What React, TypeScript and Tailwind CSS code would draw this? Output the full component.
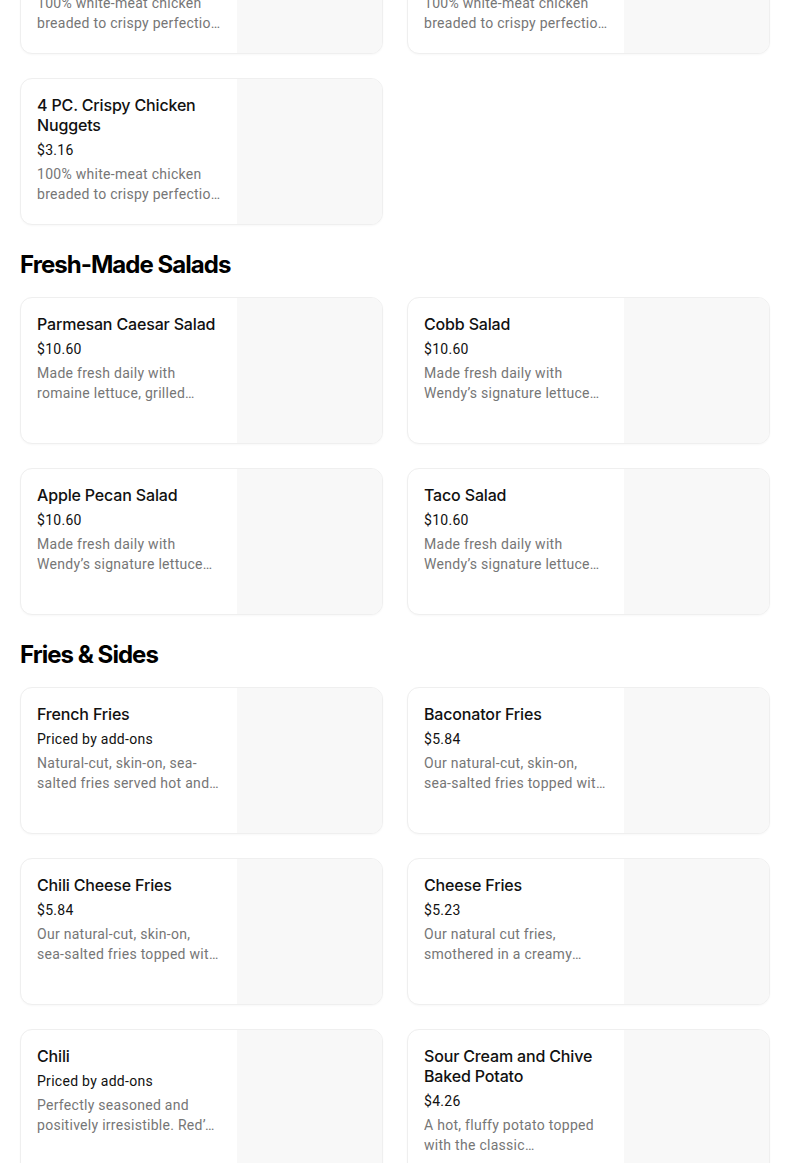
import React from "react";

type Item = { title: string; price: string; desc: string };

const nuggets: Item[] = [
  { title: "10 PC. Crispy Chicken Nuggets", price: "$6.34", desc: "100% white-meat chicken breaded to crispy perfection and served with your choice of dipping sauce." },
  { title: "6 PC. Crispy Chicken Nuggets", price: "$4.22", desc: "100% white-meat chicken breaded to crispy perfection and served with your choice of dipping sauce." },
  { title: "4 PC. Crispy Chicken Nuggets", price: "$3.16", desc: "100% white-meat chicken breaded to crispy perfection and served with your choice of dipping sauce." },
];

const salads: Item[] = [
  { title: "Parmesan Caesar Salad", price: "$10.60", desc: "Made fresh daily with romaine lettuce, grilled chicken, shaved parmesan cheese and croutons." },
  { title: "Cobb Salad", price: "$10.60", desc: "Made fresh daily with Wendy’s signature lettuce blend, grilled chicken and bacon." },
  { title: "Apple Pecan Salad", price: "$10.60", desc: "Made fresh daily with Wendy’s signature lettuce blend, red and green apples and pecans." },
  { title: "Taco Salad", price: "$10.60", desc: "Made fresh daily with Wendy’s signature lettuce blend, chili, cheese and tortilla chips." },
];

const fries: Item[] = [
  { title: "French Fries", price: "Priced by add-ons", desc: "Natural-cut, skin-on, sea-salted fries served hot and crispy." },
  { title: "Baconator Fries", price: "$5.84", desc: "Our natural-cut, skin-on, sea-salted fries topped with cheese sauce and crispy bacon." },
  { title: "Chili Cheese Fries", price: "$5.84", desc: "Our natural-cut, skin-on, sea-salted fries topped with chili and cheese sauce." },
  { title: "Cheese Fries", price: "$5.23", desc: "Our natural cut fries, smothered in a creamy cheese sauce." },
  { title: "Chili", price: "Priced by add-ons", desc: "Perfectly seasoned and positively irresistible. Red’s rich chili is made with beef and beans." },
  { title: "Sour Cream and Chive Baked Potato", price: "$4.26", desc: "A hot, fluffy potato topped with the classic combination of sour cream and chives." },
];

function Card({ item }: { item: Item }) {
  return (
    <div className="flex h-[147px] overflow-hidden rounded-xl border border-[#efefef] bg-white shadow-[0_1px_2px_rgba(0,0,0,0.03)]">
      <div className="flex w-[216px] shrink-0 flex-col px-4 pt-4">
        <div className="text-[16px] font-medium leading-5 tracking-[-0.01em] text-[#111]">{item.title}</div>
        <div className="mt-[5px] font-['Roboto',sans-serif] text-[14px] leading-5 tracking-[0.02em] text-[#111]">{item.price}</div>
        <div className="mt-1 line-clamp-2 font-['Roboto',sans-serif] text-[14px] leading-5 tracking-[0.02em] text-[#767676]">{item.desc}</div>
      </div>
      <div className="flex-1 bg-[#f8f8f8]" />
    </div>
  );
}

function Grid({ items }: { items: Item[] }) {
  return (
    <div className="grid grid-cols-[363px_363px] gap-x-6 gap-y-6">
      {items.map((it) => (
        <Card key={it.title} item={it} />
      ))}
    </div>
  );
}

function Heading({ children }: { children: React.ReactNode }) {
  return (
    <h2 className="mt-6 mb-4 text-[24px] font-bold leading-8 tracking-[-0.04em] text-black">{children}</h2>
  );
}

export default function App() {
  return (
    <div className="h-[1163px] overflow-hidden bg-white" style={{ fontFamily: "Inter, 'Noto Sans', sans-serif" }}>
      <div className="-mt-[93px] px-5">
        <Grid items={nuggets} />
        <Heading>Fresh-Made Salads</Heading>
        <Grid items={salads} />
        <Heading>Fries &amp; Sides</Heading>
        <Grid items={fries} />
      </div>
    </div>
  );
}
